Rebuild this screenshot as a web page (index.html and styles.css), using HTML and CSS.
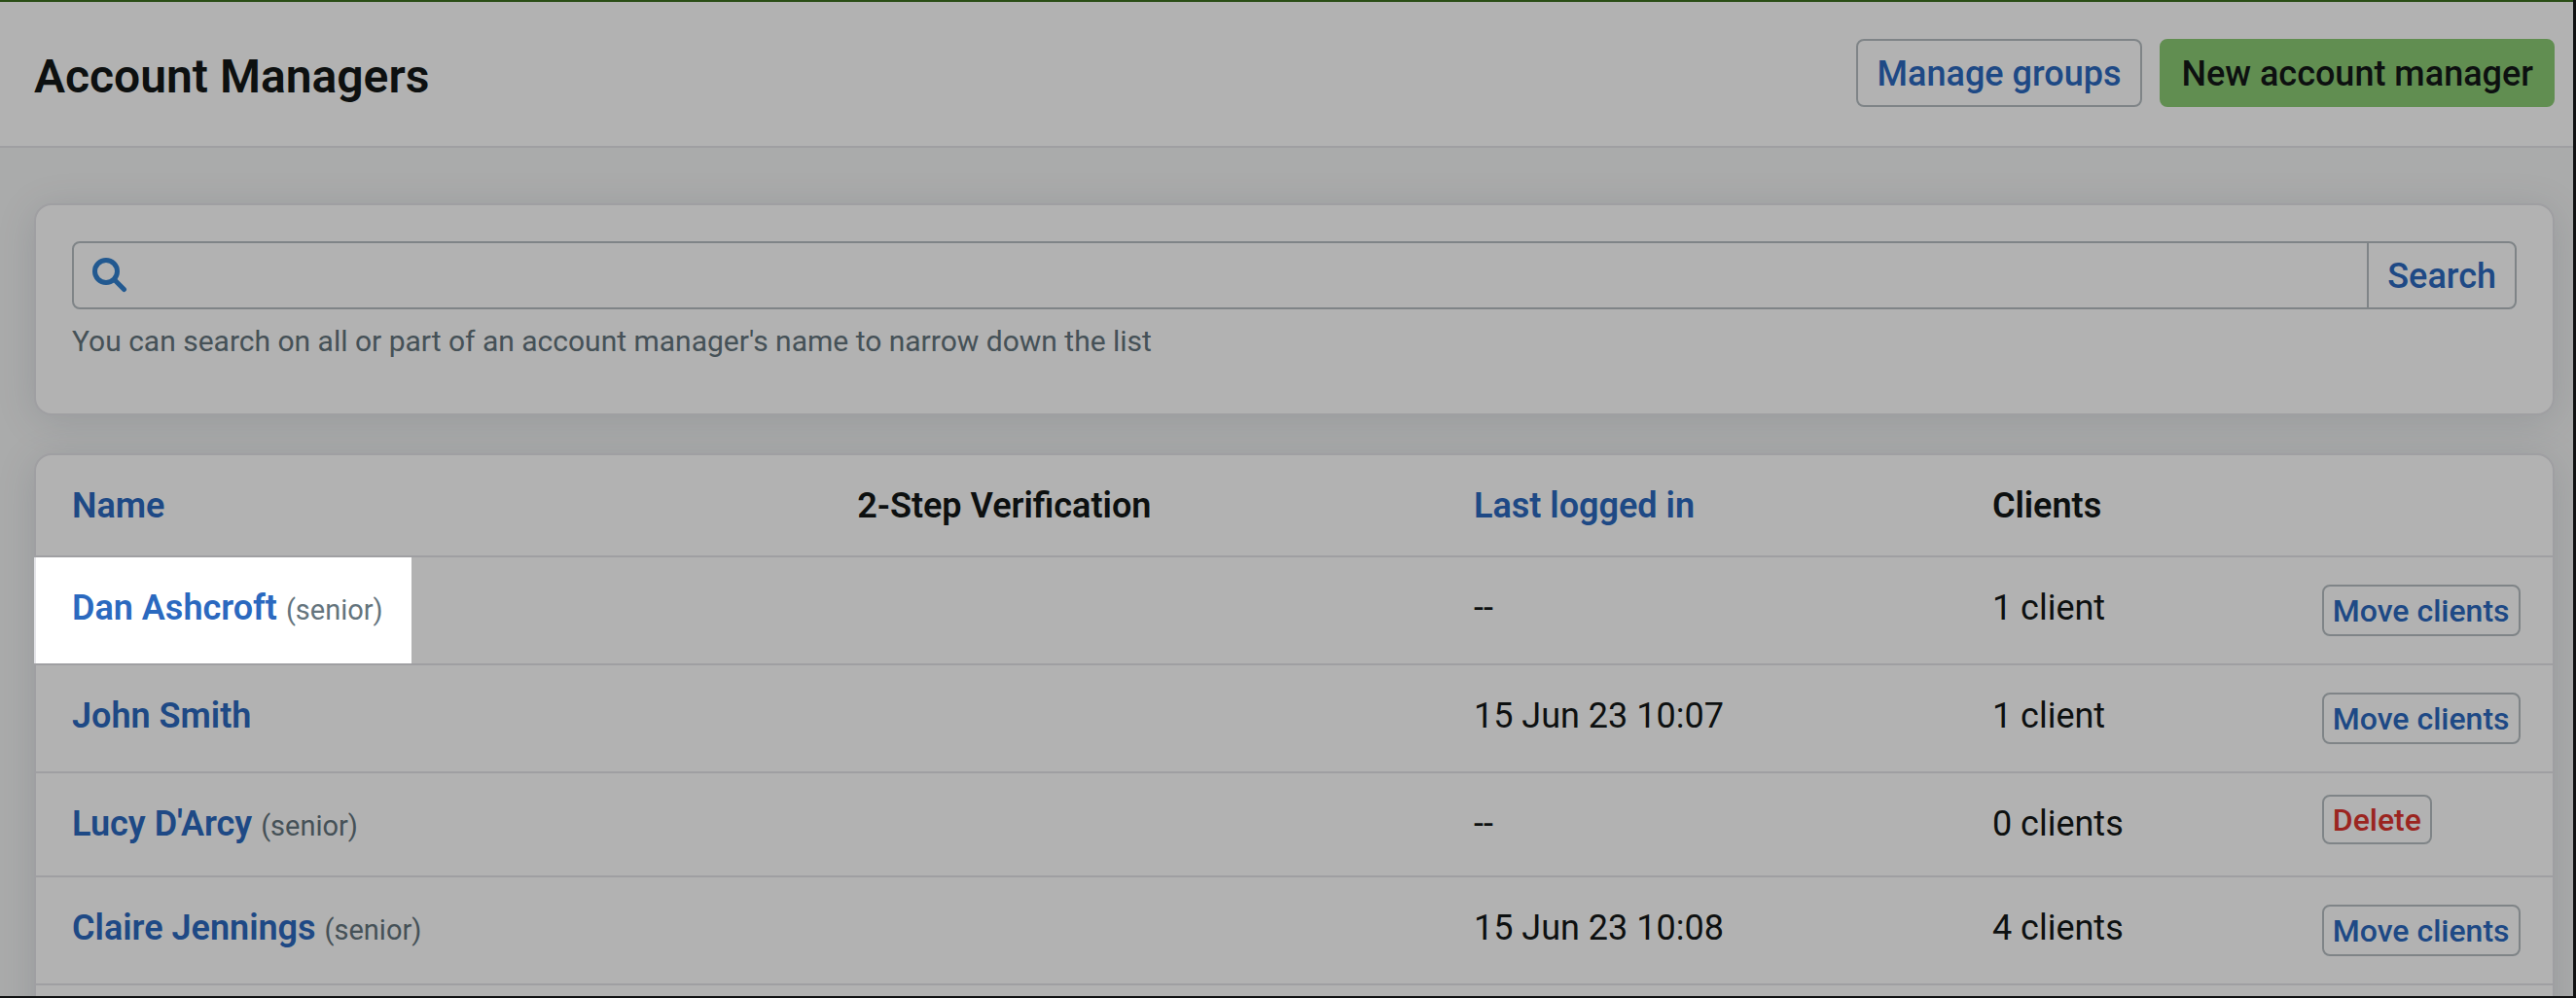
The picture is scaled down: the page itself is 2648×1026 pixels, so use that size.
FILE: index.html
```
<!DOCTYPE html>
<html lang="en">
<head>
  <meta charset="utf-8">
  <meta name="viewport" content="width=device-width, initial-scale=1">
  <title>Account Managers</title>
  <link rel="stylesheet" href="styles.css">
</head>
<body>
  <div class="page">
    <header class="page-header">
      <h1 class="page-title">Account Managers</h1>
      <div class="page-actions">
        <button type="button" class="btn">Manage groups</button>
        <button type="button" class="btn btn-primary">New account manager</button>
      </div>
    </header>

    <main class="content">
      <form class="card search-card">
        <div class="search-field">
          <label class="search-label" for="search" aria-label="Search account managers">
            <svg class="search-icon" viewBox="0 0 36 36" aria-hidden="true">
              <circle cx="14" cy="14" r="11.5"/>
              <path d="M22.5 22.5 32.5 32.5"/>
            </svg>
          </label>
          <input class="search-input" id="search" type="text" aria-describedby="search-hint">
          <button type="button" class="search-button">Search</button>
        </div>
        <p class="hint" id="search-hint">You can search on all or part of an account manager's name to narrow down the list</p>
      </form>

      <section class="card table-card">
        <table class="managers">
          <colgroup>
            <col class="col-name">
            <col class="col-verification">
            <col class="col-login">
            <col class="col-clients">
            <col class="col-actions">
          </colgroup>
          <thead>
            <tr>
              <th scope="col"><a href="#">Name</a></th>
              <th scope="col">2-Step Verification</th>
              <th scope="col"><a href="#">Last logged in</a></th>
              <th scope="col">Clients</th>
              <td></td>
            </tr>
          </thead>
          <tbody>
            <tr>
              <td class="spotlit"><a class="name" href="#">Dan Ashcroft</a> <span class="role">(senior)</span><span class="spotlight"></span></td>
              <td></td>
              <td>--</td>
              <td>1 client</td>
              <td class="actions"><button type="button" class="btn btn-small">Move clients</button></td>
            </tr>
            <tr>
              <td><a class="name" href="#">John Smith</a></td>
              <td></td>
              <td>15 Jun 23 10:07</td>
              <td>1 client</td>
              <td class="actions"><button type="button" class="btn btn-small">Move clients</button></td>
            </tr>
            <tr>
              <td><a class="name" href="#">Lucy D'Arcy</a> <span class="role">(senior)</span></td>
              <td></td>
              <td>--</td>
              <td>0 clients</td>
              <td class="actions actions-delete"><button type="button" class="btn btn-small btn-danger">Delete</button></td>
            </tr>
            <tr>
              <td><a class="name" href="#">Claire Jennings</a> <span class="role">(senior)</span></td>
              <td></td>
              <td>15 Jun 23 10:08</td>
              <td>4 clients</td>
              <td class="actions"><button type="button" class="btn btn-small">Move clients</button></td>
            </tr>
          </tbody>
        </table>
      </section>
    </main>
  </div>
</body>
</html>
```
FILE: styles.css
```
:root {
  --ink: #141817;
  --muted: #64747d;
  --link: #2b69bf;
  --danger: #df362e;
  --line: #e4e4e8;
  --control: #b6bec2;
}

* {
  box-sizing: border-box;
}

body {
  margin: 0;
  color: var(--ink);
  font: 400 36px/42px Roboto, "Liberation Sans", sans-serif;
}

a {
  color: var(--link);
  text-decoration: none;
}

button,
input {
  font: inherit;
}

/* The page sits in a dark frame on its right and bottom edges */
.page {
  height: 100vh;
  overflow: hidden;
  background: #f4f5f5;
  border-right: 3px solid #111213;
  border-bottom: 2px solid #111213;
}

.page-header {
  display: flex;
  align-items: center;
  justify-content: space-between;
  padding: 38px 19px 40px 35px;
  background: #fff;
  border-top: 2px solid #3d7020;
  border-bottom: 2px solid var(--line);
}

.page-title {
  margin: 0;
  padding-top: 8px;
  font-size: 48px;
  font-weight: 600;
  line-height: 56px;
}

.page-actions {
  display: flex;
  gap: 18px;
}

.btn {
  height: 70px;
  padding: 2px 20px 0;
  color: var(--link);
  font-weight: 500;
  background: #fff;
  border: 2px solid var(--control);
  border-radius: 8px;
}

.btn-primary {
  color: var(--ink);
  background: #8ccc75;
  border-color: #8ccc75;
}

.btn-small {
  display: block;
  height: 53px;
  padding: 0 9px;
  font-size: 32px;
  line-height: 38px;
}

.btn-danger {
  height: 51px;
  color: var(--danger);
}

.content {
  display: flex;
  flex-direction: column;
  gap: 39px;
  padding: 57px 19px 0 35px;
}

.card {
  background: #fff;
  border: 2px solid var(--line);
  border-radius: 18px;
  box-shadow: 0 6px 40px rgba(60, 70, 90, 0.14);
}

.search-card {
  padding: 37px 37px 56px;
}

.search-field {
  display: flex;
  height: 70px;
  border: 2px solid var(--control);
  border-radius: 8px;
}

.search-label {
  display: flex;
  align-items: center;
  padding-left: 19px;
}

.search-icon {
  width: 36px;
  height: 36px;
  fill: none;
  stroke: #3280cf;
  stroke-width: 5;
  stroke-linecap: round;
}

.search-input {
  flex: 1;
  min-width: 0;
  padding: 0 16px;
  background: none;
  border: 0;
}

.search-button {
  padding: 2px 19px 0;
  color: var(--link);
  font-weight: 500;
  background: none;
  border: 0;
  border-left: 2px solid var(--control);
}

.hint {
  margin: 15px 0 0;
  color: var(--muted);
  font-size: 30px;
  line-height: 36px;
}

.table-card {
  padding-bottom: 72px;
}

.managers {
  width: 100%;
  table-layout: fixed;
  border-spacing: 0;
}

.col-name { width: 31.2%; }
.col-verification { width: 24.5%; }
.col-login { width: 20.6%; }
.col-clients { width: 13.1%; }
.col-actions { width: 10.6%; }

th,
td {
  padding: 31px 0 30px 37px;
  text-align: left;
  vertical-align: top;
  border-bottom: 2px solid var(--line);
}

th,
.name {
  font-weight: 600;
}

.role {
  color: var(--muted);
  font-size: 29px;
}

.actions {
  padding-top: 28px;
  padding-bottom: 28px;
}

.actions-delete {
  padding-top: 22px;
  padding-bottom: 32px;
}

/* Dims the whole page except for the highlighted account manager */
.spotlit {
  position: relative;
}

.spotlight {
  position: absolute;
  inset: 0 auto 0 -2px;
  width: 388px;
  pointer-events: none;
  box-shadow: 0 0 0 200vmax rgba(0, 0, 0, 0.3);
}
```
